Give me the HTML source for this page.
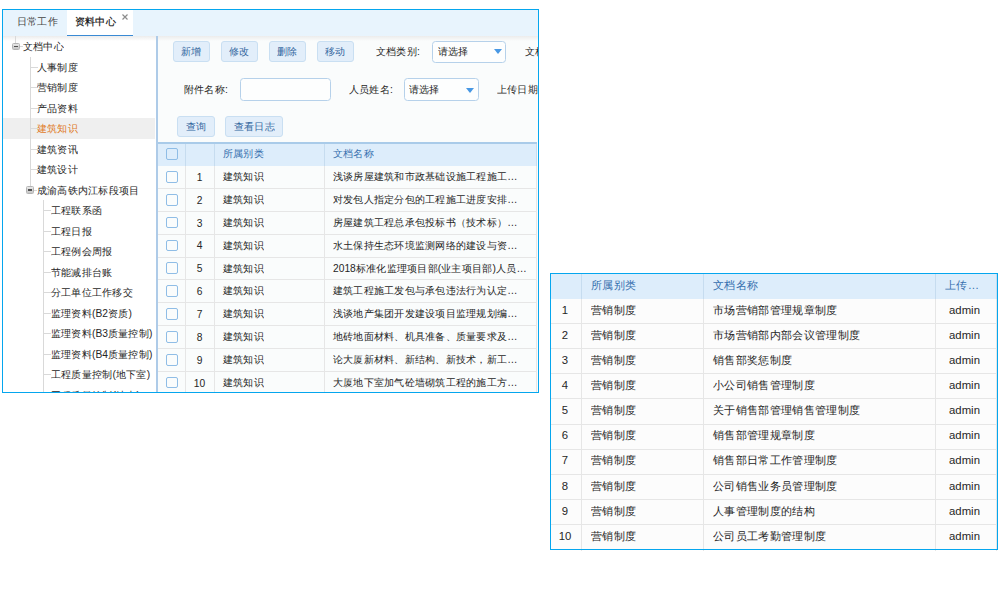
<!DOCTYPE html>
<html><head><meta charset="utf-8">
<style>
*{box-sizing:border-box;margin:0;padding:0}
body{width:1000px;height:600px;background:#fff;position:relative;overflow:hidden;font-family:"Liberation Sans",sans-serif;color:#2a2a2a}
.a{position:absolute}
.tx{position:absolute;white-space:nowrap;line-height:20px;height:20px}
.btn{position:absolute;height:21px;border:1px solid #c9dff2;background:#e2eefa;border-radius:3px}
.sel{position:absolute;height:22px;border:1px solid #b6d1ea;border-radius:3.5px;background:#fdfefe}
.arr{position:absolute;width:0;height:0;border-left:4px solid transparent;border-right:4px solid transparent;border-top:5px solid #4898e4}
.cb{position:absolute;width:11.5px;height:11.8px;border:1.5px solid #8fbde6;border-radius:2px;background:transparent}
.vl{position:absolute;width:1px;background:#d9d9d9}
.hz{position:absolute;height:1px;background:#d9d9d9}
.ic{position:absolute;width:7.5px;height:7.5px;border:1px solid #b4b4b4;border-radius:1.5px;background:linear-gradient(#e8e8e8,#c6c6c6)}
.ic:after{content:"";position:absolute;left:1px;top:2.2px;width:3.5px;height:1.5px;background:#505050}
</style></head><body>
<div class="a" style="left:3px;top:10px;width:535px;height:26px;background:#e8f4fd"></div><div class="a" style="left:67px;top:10px;width:66px;height:26px;background:#fff"></div><div class="a" style="left:67px;top:35px;width:66px;height:1px;background:#3a8ad4"></div><div class="tx" style="left:16.50px;top:11.00px;font-size:11px;color:#444;transform:scale(0.9318);transform-origin:0 50%;">日常工作</div><div class="tx" style="left:74.50px;top:11.20px;font-size:11px;color:#111;transform:scale(0.9318);transform-origin:0 50%;-webkit-text-stroke:0.2px #111">资料中心</div><div class="a" style="left:121.5px;top:14px;width:6px;height:6px"><svg width="6" height="6" style="position:absolute;left:0;top:0"><path d="M0.5 0.5L5.5 5.5M5.5 0.5L0.5 5.5" stroke="#8c8c8c" stroke-width="1.15"/></svg></div><div class="a" style="left:0;top:0;width:538px;height:392px;overflow:hidden"><div class="a" style="left:3px;top:36px;width:535px;height:356px;background:#fff"></div><div class="a" style="left:158px;top:36px;width:380px;height:356px;background:#fafcfc"></div><div class="a" style="left:3px;top:36px;width:535px;height:5px;background:linear-gradient(#ececec,rgba(250,250,250,0))"></div><div class="a" style="left:156px;top:36px;width:2px;height:356px;background:#aecbe8"></div><div class="a" style="left:3px;top:118px;width:152px;height:21px;background:#efefef"></div><div class="vl" style="left:15px;top:36px;height:7px"></div><div class="vl" style="left:29.5px;top:57px;height:129.3px"></div><div class="vl" style="left:43px;top:200.3px;height:200px"></div><div class="a" style="left:0;top:0;width:156px;height:392px;overflow:hidden"><div class="ic" style="left:12px;top:42.7px"></div><div class="hz" style="left:20px;top:46.0px;width:3px"></div><div class="tx" style="left:23.00px;top:36.10px;font-size:11px;color:#262626;transform:scale(0.9318);transform-origin:0 50%;">文档中心</div><div class="hz" style="left:30.5px;top:66.5px;width:7px"></div><div class="tx" style="left:37.00px;top:56.60px;font-size:11px;color:#262626;transform:scale(0.9318);transform-origin:0 50%;">人事制度</div><div class="hz" style="left:30.5px;top:87.0px;width:7px"></div><div class="tx" style="left:37.00px;top:77.10px;font-size:11px;color:#262626;transform:scale(0.9318);transform-origin:0 50%;">营销制度</div><div class="hz" style="left:30.5px;top:107.5px;width:7px"></div><div class="tx" style="left:37.00px;top:97.60px;font-size:11px;color:#262626;transform:scale(0.9318);transform-origin:0 50%;">产品资料</div><div class="hz" style="left:30.5px;top:128.0px;width:7px"></div><div class="tx" style="left:37.00px;top:118.10px;font-size:11px;color:#e07a27;transform:scale(0.9318);transform-origin:0 50%;">建筑知识</div><div class="hz" style="left:30.5px;top:148.5px;width:7px"></div><div class="tx" style="left:37.00px;top:138.60px;font-size:11px;color:#262626;transform:scale(0.9318);transform-origin:0 50%;">建筑资讯</div><div class="hz" style="left:30.5px;top:169.0px;width:7px"></div><div class="tx" style="left:37.00px;top:159.10px;font-size:11px;color:#262626;transform:scale(0.9318);transform-origin:0 50%;">建筑设计</div><div class="ic" style="left:26px;top:186.2px"></div><div class="hz" style="left:34px;top:189.5px;width:3px"></div><div class="tx" style="left:37.00px;top:179.60px;font-size:11px;color:#262626;transform:scale(0.9318);transform-origin:0 50%;">成渝高铁内江标段项目</div><div class="hz" style="left:44px;top:210.0px;width:7px"></div><div class="tx" style="left:51.00px;top:200.10px;font-size:11px;color:#262626;transform:scale(0.9318);transform-origin:0 50%;">工程联系函</div><div class="hz" style="left:44px;top:230.5px;width:7px"></div><div class="tx" style="left:51.00px;top:220.60px;font-size:11px;color:#262626;transform:scale(0.9318);transform-origin:0 50%;">工程日报</div><div class="hz" style="left:44px;top:251.0px;width:7px"></div><div class="tx" style="left:51.00px;top:241.10px;font-size:11px;color:#262626;transform:scale(0.9318);transform-origin:0 50%;">工程例会周报</div><div class="hz" style="left:44px;top:271.5px;width:7px"></div><div class="tx" style="left:51.00px;top:261.60px;font-size:11px;color:#262626;transform:scale(0.9318);transform-origin:0 50%;">节能减排台账</div><div class="hz" style="left:44px;top:292.0px;width:7px"></div><div class="tx" style="left:51.00px;top:282.10px;font-size:11px;color:#262626;transform:scale(0.9318);transform-origin:0 50%;">分工单位工作移交</div><div class="hz" style="left:44px;top:312.5px;width:7px"></div><div class="tx" style="left:51.00px;top:302.60px;font-size:11px;color:#262626;transform:scale(0.9318);transform-origin:0 50%;">监理资料(B2资质)</div><div class="hz" style="left:44px;top:333.0px;width:7px"></div><div class="tx" style="left:51.00px;top:323.10px;font-size:11px;color:#262626;transform:scale(0.9318);transform-origin:0 50%;">监理资料(B3质量控制)</div><div class="hz" style="left:44px;top:353.5px;width:7px"></div><div class="tx" style="left:51.00px;top:343.60px;font-size:11px;color:#262626;transform:scale(0.9318);transform-origin:0 50%;">监理资料(B4质量控制)</div><div class="hz" style="left:44px;top:374.0px;width:7px"></div><div class="tx" style="left:51.00px;top:364.10px;font-size:11px;color:#262626;transform:scale(0.9318);transform-origin:0 50%;">工程质量控制(地下室)</div><div class="hz" style="left:44px;top:394.5px;width:7px"></div><div class="tx" style="left:51.00px;top:384.60px;font-size:11px;color:#262626;transform:scale(0.9318);transform-origin:0 50%;">工程质量控制(地上)</div></div><div class="btn" style="left:173px;top:41px;width:37px"></div><div class="tx" style="left:180.50px;top:41.10px;font-size:11px;color:#33679e;transform:scale(0.9318);transform-origin:0 50%;">新增</div><div class="btn" style="left:221px;top:41px;width:37px"></div><div class="tx" style="left:229.10px;top:41.10px;font-size:11px;color:#33679e;transform:scale(0.9318);transform-origin:0 50%;">修改</div><div class="btn" style="left:269px;top:41px;width:37px"></div><div class="tx" style="left:276.90px;top:41.10px;font-size:11px;color:#33679e;transform:scale(0.9318);transform-origin:0 50%;">删除</div><div class="btn" style="left:317px;top:41px;width:37px"></div><div class="tx" style="left:324.90px;top:41.10px;font-size:11px;color:#33679e;transform:scale(0.9318);transform-origin:0 50%;">移动</div><div class="tx" style="left:376.20px;top:40.90px;font-size:11px;color:#262626;transform:scale(0.9318);transform-origin:0 50%;">文档类别:</div><div class="sel" style="left:432px;top:41px;width:74px"></div><div class="arr" style="left:493.5px;top:49px"></div><div class="tx" style="left:437.60px;top:40.90px;font-size:11px;color:#262626;transform:scale(0.9318);transform-origin:0 50%;">请选择</div><div class="tx" style="left:525.00px;top:40.90px;font-size:11px;color:#262626;transform:scale(0.9318);transform-origin:0 50%;">文档</div><div class="tx" style="left:184.40px;top:79.00px;font-size:11px;color:#262626;transform:scale(0.9318);transform-origin:0 50%;">附件名称:</div><div class="sel" style="left:240px;top:78px;width:91px;height:23px"></div><div class="tx" style="left:348.60px;top:79.00px;font-size:11px;color:#262626;transform:scale(0.9318);transform-origin:0 50%;">人员姓名:</div><div class="sel" style="left:404px;top:78px;width:75px;height:23px"></div><div class="arr" style="left:465.5px;top:87.5px"></div><div class="tx" style="left:409.40px;top:79.00px;font-size:11px;color:#262626;transform:scale(0.9318);transform-origin:0 50%;">请选择</div><div class="tx" style="left:497.40px;top:79.00px;font-size:11px;color:#262626;transform:scale(0.9318);transform-origin:0 50%;">上传日期</div><div class="btn" style="left:177px;top:116px;width:38px"></div><div class="tx" style="left:185.50px;top:116.10px;font-size:11px;color:#33679e;transform:scale(0.9318);transform-origin:0 50%;">查询</div><div class="btn" style="left:225px;top:116px;width:58px"></div><div class="tx" style="left:233.50px;top:116.10px;font-size:11px;color:#33679e;transform:scale(0.9318);transform-origin:0 50%;">查看日志</div><div class="a" style="left:158px;top:142px;width:379px;height:1.5px;background:#a9cbe9"></div><div class="a" style="left:158px;top:143.5px;width:379px;height:22.8px;background:#ddedfb"></div><div class="a" style="left:185px;top:143.5px;width:1px;height:22.8px;background:#c6dcef"></div><div class="a" style="left:185px;top:166.3px;width:1px;height:230px;background:#e6e6e6"></div><div class="a" style="left:214px;top:143.5px;width:1px;height:22.8px;background:#c6dcef"></div><div class="a" style="left:214px;top:166.3px;width:1px;height:230px;background:#e6e6e6"></div><div class="a" style="left:324px;top:143.5px;width:1px;height:22.8px;background:#c6dcef"></div><div class="a" style="left:324px;top:166.3px;width:1px;height:230px;background:#e6e6e6"></div><div class="a" style="left:536px;top:143.5px;width:1px;height:22.8px;background:#c6dcef"></div><div class="a" style="left:536px;top:166.3px;width:1px;height:230px;background:#e6e6e6"></div><div class="cb" style="left:166px;top:148.2px"></div><div class="tx" style="left:222.70px;top:143.10px;font-size:11px;color:#356fae;transform:scale(0.9318);transform-origin:0 50%;">所属别类</div><div class="tx" style="left:333.00px;top:143.10px;font-size:11px;color:#356fae;transform:scale(0.9318);transform-origin:0 50%;">文档名称</div><div class="a" style="left:158px;top:188.0px;width:379px;height:1px;background:#e6e6e6"></div><div class="cb" style="left:166px;top:171.0px"></div><div class="tx" style="left:184.50px;top:166.80px;width:29.00px;text-align:center;font-size:11px;color:#262626;transform:scale(0.9318);transform-origin:50% 50%;">1</div><div class="tx" style="left:222.70px;top:166.10px;font-size:11px;color:#262626;transform:scale(0.9318);transform-origin:0 50%;">建筑知识</div><div class="tx" style="left:333.00px;top:166.10px;font-size:11px;color:#262626;transform:scale(0.9318);transform-origin:0 50%;">浅谈房屋建筑和市政基础设施工程施工…</div><div class="a" style="left:158px;top:210.9px;width:379px;height:1px;background:#e6e6e6"></div><div class="cb" style="left:166px;top:193.9px"></div><div class="tx" style="left:184.50px;top:189.66px;width:29.00px;text-align:center;font-size:11px;color:#262626;transform:scale(0.9318);transform-origin:50% 50%;">2</div><div class="tx" style="left:222.70px;top:188.96px;font-size:11px;color:#262626;transform:scale(0.9318);transform-origin:0 50%;">建筑知识</div><div class="tx" style="left:333.00px;top:188.96px;font-size:11px;color:#262626;transform:scale(0.9318);transform-origin:0 50%;">对发包人指定分包的工程施工进度安排…</div><div class="a" style="left:158px;top:233.7px;width:379px;height:1px;background:#e6e6e6"></div><div class="cb" style="left:166px;top:216.7px"></div><div class="tx" style="left:184.50px;top:212.52px;width:29.00px;text-align:center;font-size:11px;color:#262626;transform:scale(0.9318);transform-origin:50% 50%;">3</div><div class="tx" style="left:222.70px;top:211.82px;font-size:11px;color:#262626;transform:scale(0.9318);transform-origin:0 50%;">建筑知识</div><div class="tx" style="left:333.00px;top:211.82px;font-size:11px;color:#262626;transform:scale(0.9318);transform-origin:0 50%;">房屋建筑工程总承包投标书（技术标）…</div><div class="a" style="left:158px;top:256.6px;width:379px;height:1px;background:#e6e6e6"></div><div class="cb" style="left:166px;top:239.6px"></div><div class="tx" style="left:184.50px;top:235.38px;width:29.00px;text-align:center;font-size:11px;color:#262626;transform:scale(0.9318);transform-origin:50% 50%;">4</div><div class="tx" style="left:222.70px;top:234.68px;font-size:11px;color:#262626;transform:scale(0.9318);transform-origin:0 50%;">建筑知识</div><div class="tx" style="left:333.00px;top:234.68px;font-size:11px;color:#262626;transform:scale(0.9318);transform-origin:0 50%;">水土保持生态环境监测网络的建设与资…</div><div class="a" style="left:158px;top:279.4px;width:379px;height:1px;background:#e6e6e6"></div><div class="cb" style="left:166px;top:262.4px"></div><div class="tx" style="left:184.50px;top:258.24px;width:29.00px;text-align:center;font-size:11px;color:#262626;transform:scale(0.9318);transform-origin:50% 50%;">5</div><div class="tx" style="left:222.70px;top:257.54px;font-size:11px;color:#262626;transform:scale(0.9318);transform-origin:0 50%;">建筑知识</div><div class="tx" style="left:333.00px;top:257.54px;font-size:11px;color:#262626;transform:scale(0.9318);transform-origin:0 50%;">2018标准化监理项目部(业主项目部)人员…</div><div class="a" style="left:158px;top:302.3px;width:379px;height:1px;background:#e6e6e6"></div><div class="cb" style="left:166px;top:285.3px"></div><div class="tx" style="left:184.50px;top:281.10px;width:29.00px;text-align:center;font-size:11px;color:#262626;transform:scale(0.9318);transform-origin:50% 50%;">6</div><div class="tx" style="left:222.70px;top:280.40px;font-size:11px;color:#262626;transform:scale(0.9318);transform-origin:0 50%;">建筑知识</div><div class="tx" style="left:333.00px;top:280.40px;font-size:11px;color:#262626;transform:scale(0.9318);transform-origin:0 50%;">建筑工程施工发包与承包违法行为认定…</div><div class="a" style="left:158px;top:325.2px;width:379px;height:1px;background:#e6e6e6"></div><div class="cb" style="left:166px;top:308.2px"></div><div class="tx" style="left:184.50px;top:303.96px;width:29.00px;text-align:center;font-size:11px;color:#262626;transform:scale(0.9318);transform-origin:50% 50%;">7</div><div class="tx" style="left:222.70px;top:303.26px;font-size:11px;color:#262626;transform:scale(0.9318);transform-origin:0 50%;">建筑知识</div><div class="tx" style="left:333.00px;top:303.26px;font-size:11px;color:#262626;transform:scale(0.9318);transform-origin:0 50%;">浅谈地产集团开发建设项目监理规划编…</div><div class="a" style="left:158px;top:348.0px;width:379px;height:1px;background:#e6e6e6"></div><div class="cb" style="left:166px;top:331.0px"></div><div class="tx" style="left:184.50px;top:326.82px;width:29.00px;text-align:center;font-size:11px;color:#262626;transform:scale(0.9318);transform-origin:50% 50%;">8</div><div class="tx" style="left:222.70px;top:326.12px;font-size:11px;color:#262626;transform:scale(0.9318);transform-origin:0 50%;">建筑知识</div><div class="tx" style="left:333.00px;top:326.12px;font-size:11px;color:#262626;transform:scale(0.9318);transform-origin:0 50%;">地砖地面材料、机具准备、质量要求及…</div><div class="a" style="left:158px;top:370.9px;width:379px;height:1px;background:#e6e6e6"></div><div class="cb" style="left:166px;top:353.9px"></div><div class="tx" style="left:184.50px;top:349.68px;width:29.00px;text-align:center;font-size:11px;color:#262626;transform:scale(0.9318);transform-origin:50% 50%;">9</div><div class="tx" style="left:222.70px;top:348.98px;font-size:11px;color:#262626;transform:scale(0.9318);transform-origin:0 50%;">建筑知识</div><div class="tx" style="left:333.00px;top:348.98px;font-size:11px;color:#262626;transform:scale(0.9318);transform-origin:0 50%;">论大厦新材料、新结构、新技术，新工…</div><div class="a" style="left:158px;top:393.7px;width:379px;height:1px;background:#e6e6e6"></div><div class="cb" style="left:166px;top:376.7px"></div><div class="tx" style="left:184.50px;top:372.54px;width:29.00px;text-align:center;font-size:11px;color:#262626;transform:scale(0.9318);transform-origin:50% 50%;">10</div><div class="tx" style="left:222.70px;top:371.84px;font-size:11px;color:#262626;transform:scale(0.9318);transform-origin:0 50%;">建筑知识</div><div class="tx" style="left:333.00px;top:371.84px;font-size:11px;color:#262626;transform:scale(0.9318);transform-origin:0 50%;">大厦地下室加气砼墙砌筑工程的施工方…</div></div><div class="a" style="left:2px;top:9px;width:537px;height:384px;border:1px solid #05a6ee"></div><div class="a" style="left:550px;top:273px;width:448px;height:277px;background:#fcfcfc"></div><div class="a" style="left:550px;top:273px;width:448px;height:25.6px;background:#ddedfb"></div><div class="a" style="left:581px;top:273px;width:1px;height:25.6px;background:#c6dcef"></div><div class="a" style="left:581px;top:298.6px;width:1px;height:252px;background:#e6e6e6"></div><div class="a" style="left:703px;top:273px;width:1px;height:25.6px;background:#c6dcef"></div><div class="a" style="left:703px;top:298.6px;width:1px;height:252px;background:#e6e6e6"></div><div class="a" style="left:935px;top:273px;width:1px;height:25.6px;background:#c6dcef"></div><div class="a" style="left:935px;top:298.6px;width:1px;height:252px;background:#e6e6e6"></div><div class="a" style="left:996px;top:273px;width:1px;height:25.6px;background:#c6dcef"></div><div class="a" style="left:996px;top:298.6px;width:1px;height:252px;background:#e6e6e6"></div><div class="tx" style="left:590.60px;top:275.10px;font-size:12px;color:#356fae;transform:scale(0.9458);transform-origin:0 50%;">所属别类</div><div class="tx" style="left:712.60px;top:275.10px;font-size:12px;color:#356fae;transform:scale(0.9458);transform-origin:0 50%;">文档名称</div><div class="tx" style="left:945.00px;top:275.10px;font-size:12px;color:#356fae;transform:scale(0.9458);transform-origin:0 50%;">上传…</div><div class="a" style="left:550px;top:323.2px;width:448px;height:1px;background:#e6e6e6"></div><div class="tx" style="left:550.50px;top:299.94px;width:28.00px;text-align:center;font-size:12px;color:#262626;transform:scale(0.9458);transform-origin:50% 50%;">1</div><div class="tx" style="left:590.60px;top:299.94px;font-size:12px;color:#262626;transform:scale(0.9458);transform-origin:0 50%;">营销制度</div><div class="tx" style="left:712.60px;top:299.94px;font-size:12px;color:#262626;transform:scale(0.9458);transform-origin:0 50%;">市场营销部管理规章制度</div><div class="tx" style="left:933.70px;top:299.94px;width:61.00px;text-align:center;font-size:12px;color:#262626;transform:scale(0.9458);transform-origin:50% 50%;">admin</div><div class="a" style="left:550px;top:348.3px;width:448px;height:1px;background:#e6e6e6"></div><div class="tx" style="left:550.50px;top:325.02px;width:28.00px;text-align:center;font-size:12px;color:#262626;transform:scale(0.9458);transform-origin:50% 50%;">2</div><div class="tx" style="left:590.60px;top:325.02px;font-size:12px;color:#262626;transform:scale(0.9458);transform-origin:0 50%;">营销制度</div><div class="tx" style="left:712.60px;top:325.02px;font-size:12px;color:#262626;transform:scale(0.9458);transform-origin:0 50%;">市场营销部内部会议管理制度</div><div class="tx" style="left:933.70px;top:325.02px;width:61.00px;text-align:center;font-size:12px;color:#262626;transform:scale(0.9458);transform-origin:50% 50%;">admin</div><div class="a" style="left:550px;top:373.3px;width:448px;height:1px;background:#e6e6e6"></div><div class="tx" style="left:550.50px;top:350.10px;width:28.00px;text-align:center;font-size:12px;color:#262626;transform:scale(0.9458);transform-origin:50% 50%;">3</div><div class="tx" style="left:590.60px;top:350.10px;font-size:12px;color:#262626;transform:scale(0.9458);transform-origin:0 50%;">营销制度</div><div class="tx" style="left:712.60px;top:350.10px;font-size:12px;color:#262626;transform:scale(0.9458);transform-origin:0 50%;">销售部奖惩制度</div><div class="tx" style="left:933.70px;top:350.10px;width:61.00px;text-align:center;font-size:12px;color:#262626;transform:scale(0.9458);transform-origin:50% 50%;">admin</div><div class="a" style="left:550px;top:398.4px;width:448px;height:1px;background:#e6e6e6"></div><div class="tx" style="left:550.50px;top:375.18px;width:28.00px;text-align:center;font-size:12px;color:#262626;transform:scale(0.9458);transform-origin:50% 50%;">4</div><div class="tx" style="left:590.60px;top:375.18px;font-size:12px;color:#262626;transform:scale(0.9458);transform-origin:0 50%;">营销制度</div><div class="tx" style="left:712.60px;top:375.18px;font-size:12px;color:#262626;transform:scale(0.9458);transform-origin:0 50%;">小公司销售管理制度</div><div class="tx" style="left:933.70px;top:375.18px;width:61.00px;text-align:center;font-size:12px;color:#262626;transform:scale(0.9458);transform-origin:50% 50%;">admin</div><div class="a" style="left:550px;top:423.5px;width:448px;height:1px;background:#e6e6e6"></div><div class="tx" style="left:550.50px;top:400.26px;width:28.00px;text-align:center;font-size:12px;color:#262626;transform:scale(0.9458);transform-origin:50% 50%;">5</div><div class="tx" style="left:590.60px;top:400.26px;font-size:12px;color:#262626;transform:scale(0.9458);transform-origin:0 50%;">营销制度</div><div class="tx" style="left:712.60px;top:400.26px;font-size:12px;color:#262626;transform:scale(0.9458);transform-origin:0 50%;">关于销售部管理销售管理制度</div><div class="tx" style="left:933.70px;top:400.26px;width:61.00px;text-align:center;font-size:12px;color:#262626;transform:scale(0.9458);transform-origin:50% 50%;">admin</div><div class="a" style="left:550px;top:448.6px;width:448px;height:1px;background:#e6e6e6"></div><div class="tx" style="left:550.50px;top:425.34px;width:28.00px;text-align:center;font-size:12px;color:#262626;transform:scale(0.9458);transform-origin:50% 50%;">6</div><div class="tx" style="left:590.60px;top:425.34px;font-size:12px;color:#262626;transform:scale(0.9458);transform-origin:0 50%;">营销制度</div><div class="tx" style="left:712.60px;top:425.34px;font-size:12px;color:#262626;transform:scale(0.9458);transform-origin:0 50%;">销售部管理规章制度</div><div class="tx" style="left:933.70px;top:425.34px;width:61.00px;text-align:center;font-size:12px;color:#262626;transform:scale(0.9458);transform-origin:50% 50%;">admin</div><div class="a" style="left:550px;top:473.7px;width:448px;height:1px;background:#e6e6e6"></div><div class="tx" style="left:550.50px;top:450.42px;width:28.00px;text-align:center;font-size:12px;color:#262626;transform:scale(0.9458);transform-origin:50% 50%;">7</div><div class="tx" style="left:590.60px;top:450.42px;font-size:12px;color:#262626;transform:scale(0.9458);transform-origin:0 50%;">营销制度</div><div class="tx" style="left:712.60px;top:450.42px;font-size:12px;color:#262626;transform:scale(0.9458);transform-origin:0 50%;">销售部日常工作管理制度</div><div class="tx" style="left:933.70px;top:450.42px;width:61.00px;text-align:center;font-size:12px;color:#262626;transform:scale(0.9458);transform-origin:50% 50%;">admin</div><div class="a" style="left:550px;top:498.7px;width:448px;height:1px;background:#e6e6e6"></div><div class="tx" style="left:550.50px;top:475.50px;width:28.00px;text-align:center;font-size:12px;color:#262626;transform:scale(0.9458);transform-origin:50% 50%;">8</div><div class="tx" style="left:590.60px;top:475.50px;font-size:12px;color:#262626;transform:scale(0.9458);transform-origin:0 50%;">营销制度</div><div class="tx" style="left:712.60px;top:475.50px;font-size:12px;color:#262626;transform:scale(0.9458);transform-origin:0 50%;">公司销售业务员管理制度</div><div class="tx" style="left:933.70px;top:475.50px;width:61.00px;text-align:center;font-size:12px;color:#262626;transform:scale(0.9458);transform-origin:50% 50%;">admin</div><div class="a" style="left:550px;top:523.8px;width:448px;height:1px;background:#e6e6e6"></div><div class="tx" style="left:550.50px;top:500.58px;width:28.00px;text-align:center;font-size:12px;color:#262626;transform:scale(0.9458);transform-origin:50% 50%;">9</div><div class="tx" style="left:590.60px;top:500.58px;font-size:12px;color:#262626;transform:scale(0.9458);transform-origin:0 50%;">营销制度</div><div class="tx" style="left:712.60px;top:500.58px;font-size:12px;color:#262626;transform:scale(0.9458);transform-origin:0 50%;">人事管理制度的结构</div><div class="tx" style="left:933.70px;top:500.58px;width:61.00px;text-align:center;font-size:12px;color:#262626;transform:scale(0.9458);transform-origin:50% 50%;">admin</div><div class="tx" style="left:550.50px;top:525.66px;width:28.00px;text-align:center;font-size:12px;color:#262626;transform:scale(0.9458);transform-origin:50% 50%;">10</div><div class="tx" style="left:590.60px;top:525.66px;font-size:12px;color:#262626;transform:scale(0.9458);transform-origin:0 50%;">营销制度</div><div class="tx" style="left:712.60px;top:525.66px;font-size:12px;color:#262626;transform:scale(0.9458);transform-origin:0 50%;">公司员工考勤管理制度</div><div class="tx" style="left:933.70px;top:525.66px;width:61.00px;text-align:center;font-size:12px;color:#262626;transform:scale(0.9458);transform-origin:50% 50%;">admin</div><div class="a" style="left:550px;top:273px;width:448px;height:277px;border:1px solid #05a6ee"></div></body></html>
